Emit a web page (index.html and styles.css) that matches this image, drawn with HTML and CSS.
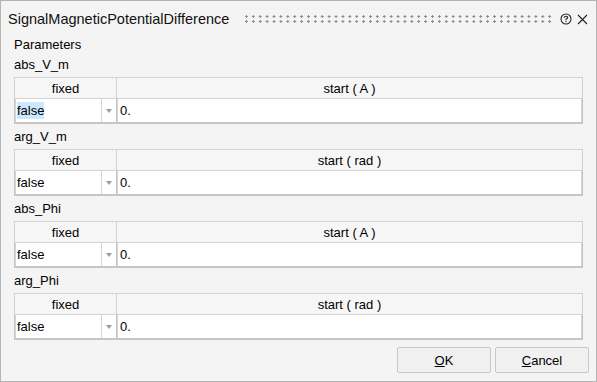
FILE: index.html
```html
<!DOCTYPE html>
<html lang="en">
    <head>
        <meta charset="utf-8" />
        <title>SignalMagneticPotentialDifference</title>
        <link rel="stylesheet" href="styles.css">
    </head>

    <body>
        <div class="dialog">
            <div class="titlebar">
                <span class="title">SignalMagneticPotentialDifference</span>
                <span class="grip"></span>
                <svg class="help" width="12" height="12" viewBox="0 0 12 12">
                    <circle cx="6" cy="6" r="5" fill="none" stroke="#222" stroke-width="1.1"/>
                    <path d="M4.3 4.8 Q4.3 3.3 6 3.3 Q7.7 3.3 7.7 4.6 Q7.7 5.5 6 6.2 L6 7.2" fill="none" stroke="#222" stroke-width="1.1"/>
                    <rect x="5.45" y="8" width="1.1" height="1.1" fill="#222"/>
                </svg>
                <svg class="close" width="11" height="11" viewBox="0 0 11 11">
                    <path d="M1 1 L10 10 M10 1 L1 10" stroke="#222" stroke-width="1.1"/>
                </svg>
            </div>

            <div class="content">
                <div class="section">Parameters</div>

                <div class="group">
                    <div class="label">abs_V_m</div>
                    <table class="grid">
                        <tr><th class="col-fixed">fixed</th><th>start ( A )</th></tr>
                        <tr>
                            <td><div class="combo"><span class="value"><span class="sel">false</span></span><span class="arrow"></span></div></td>
                            <td><div class="edit">0.</div></td>
                        </tr>
                    </table>
                </div>

                <div class="group">
                    <div class="label">arg_V_m</div>
                    <table class="grid">
                        <tr><th class="col-fixed">fixed</th><th>start ( rad )</th></tr>
                        <tr>
                            <td><div class="combo"><span class="value">false</span><span class="arrow"></span></div></td>
                            <td><div class="edit">0.</div></td>
                        </tr>
                    </table>
                </div>

                <div class="group">
                    <div class="label">abs_Phi</div>
                    <table class="grid">
                        <tr><th class="col-fixed">fixed</th><th>start ( A )</th></tr>
                        <tr>
                            <td><div class="combo"><span class="value">false</span><span class="arrow"></span></div></td>
                            <td><div class="edit">0.</div></td>
                        </tr>
                    </table>
                </div>

                <div class="group">
                    <div class="label">arg_Phi</div>
                    <table class="grid">
                        <tr><th class="col-fixed">fixed</th><th>start ( rad )</th></tr>
                        <tr>
                            <td><div class="combo"><span class="value">false</span><span class="arrow"></span></div></td>
                            <td><div class="edit">0.</div></td>
                        </tr>
                    </table>
                </div>
            </div>

            <div class="buttons">
                <button><u>O</u>K</button>
                <button><u>C</u>ancel</button>
            </div>
        </div>
    </body>
</html>
```

FILE: styles.css
```css
html, body {
    margin: 0;
    padding: 0;
    width: 597px;
    height: 382px;
    overflow: hidden;
}
body {
    font-family: "Liberation Sans", Arial, sans-serif;
    font-size: 13px;
    color: #000;
    background: #f4f4f4;
}
.dialog {
    box-sizing: border-box;
    width: 597px;
    height: 382px;
    border: 1px solid #b4b4b4;
    background: #f4f4f4;
    display: flex;
    flex-direction: column;
}
.titlebar {
    height: 36px;
    display: flex;
    align-items: center;
    padding: 0 8px 0 7px;
}
.title {
    font-size: 14.5px;
    color: #111;
    white-space: nowrap;
}
.grip {
    flex: 1;
    height: 10px;
    margin: 0 6px 0 14px;
    background-image: radial-gradient(circle, #8a8a8a 1px, transparent 1.3px);
    background-size: 6.9px 5px;
    background-position: 0 0;
}
.help {
    margin-right: 5px;
}
.content {
    padding: 0 13px;
}
.section {
    line-height: 16px;
}
.label {
    line-height: 17px;
    padding: 3px 0 4px;
}
.grid {
    width: 100%;
    border-collapse: collapse;
    border: 1px solid #c6c6c6;
    margin-bottom: 1px;
}
.grid th {
    font-weight: normal;
    height: 20px;
    padding: 0;
    border: 1px solid #d2d2d2;
    background: #f6f6f6;
}
.grid .col-fixed {
    width: 101px;
}
.grid td {
    padding: 0;
    height: 23px;
    border: 1px solid #c6c6c6;
    border-bottom-width: 2px;
    background: #fff;
}
.combo {
    display: flex;
    height: 23px;
    border-left: 1px solid #d4d4d4;
}
.combo .value {
    flex: 1;
    display: flex;
    align-items: center;
    padding-left: 1px;
    border-right: 1px solid #d4d4d4;
}
.sel {
    background: #cce8ff;
    padding: 1px 0;
}
.combo .arrow {
    width: 14px;
    position: relative;
}
.combo .arrow::after {
    content: "";
    position: absolute;
    left: 4px;
    top: 10px;
    border-left: 3px solid transparent;
    border-right: 3px solid transparent;
    border-top: 4px solid #9a9a9a;
}
.edit {
    height: 23px;
    line-height: 23px;
    padding-left: 2px;
    border-left: 1px solid #d4d4d4;
    border-right: 1px solid #d4d4d4;
}
.buttons {
    display: flex;
    justify-content: flex-end;
    gap: 4px;
    padding: 6px 7px 0 0;
}
button {
    width: 94px;
    height: 26px;
    font-family: "Liberation Sans", Arial, sans-serif;
    font-size: 13px;
    background: #f0f0f0;
    border: 1px solid #c8c8c8;
    border-radius: 2px;
    color: #000;
    padding: 0;
}
```
